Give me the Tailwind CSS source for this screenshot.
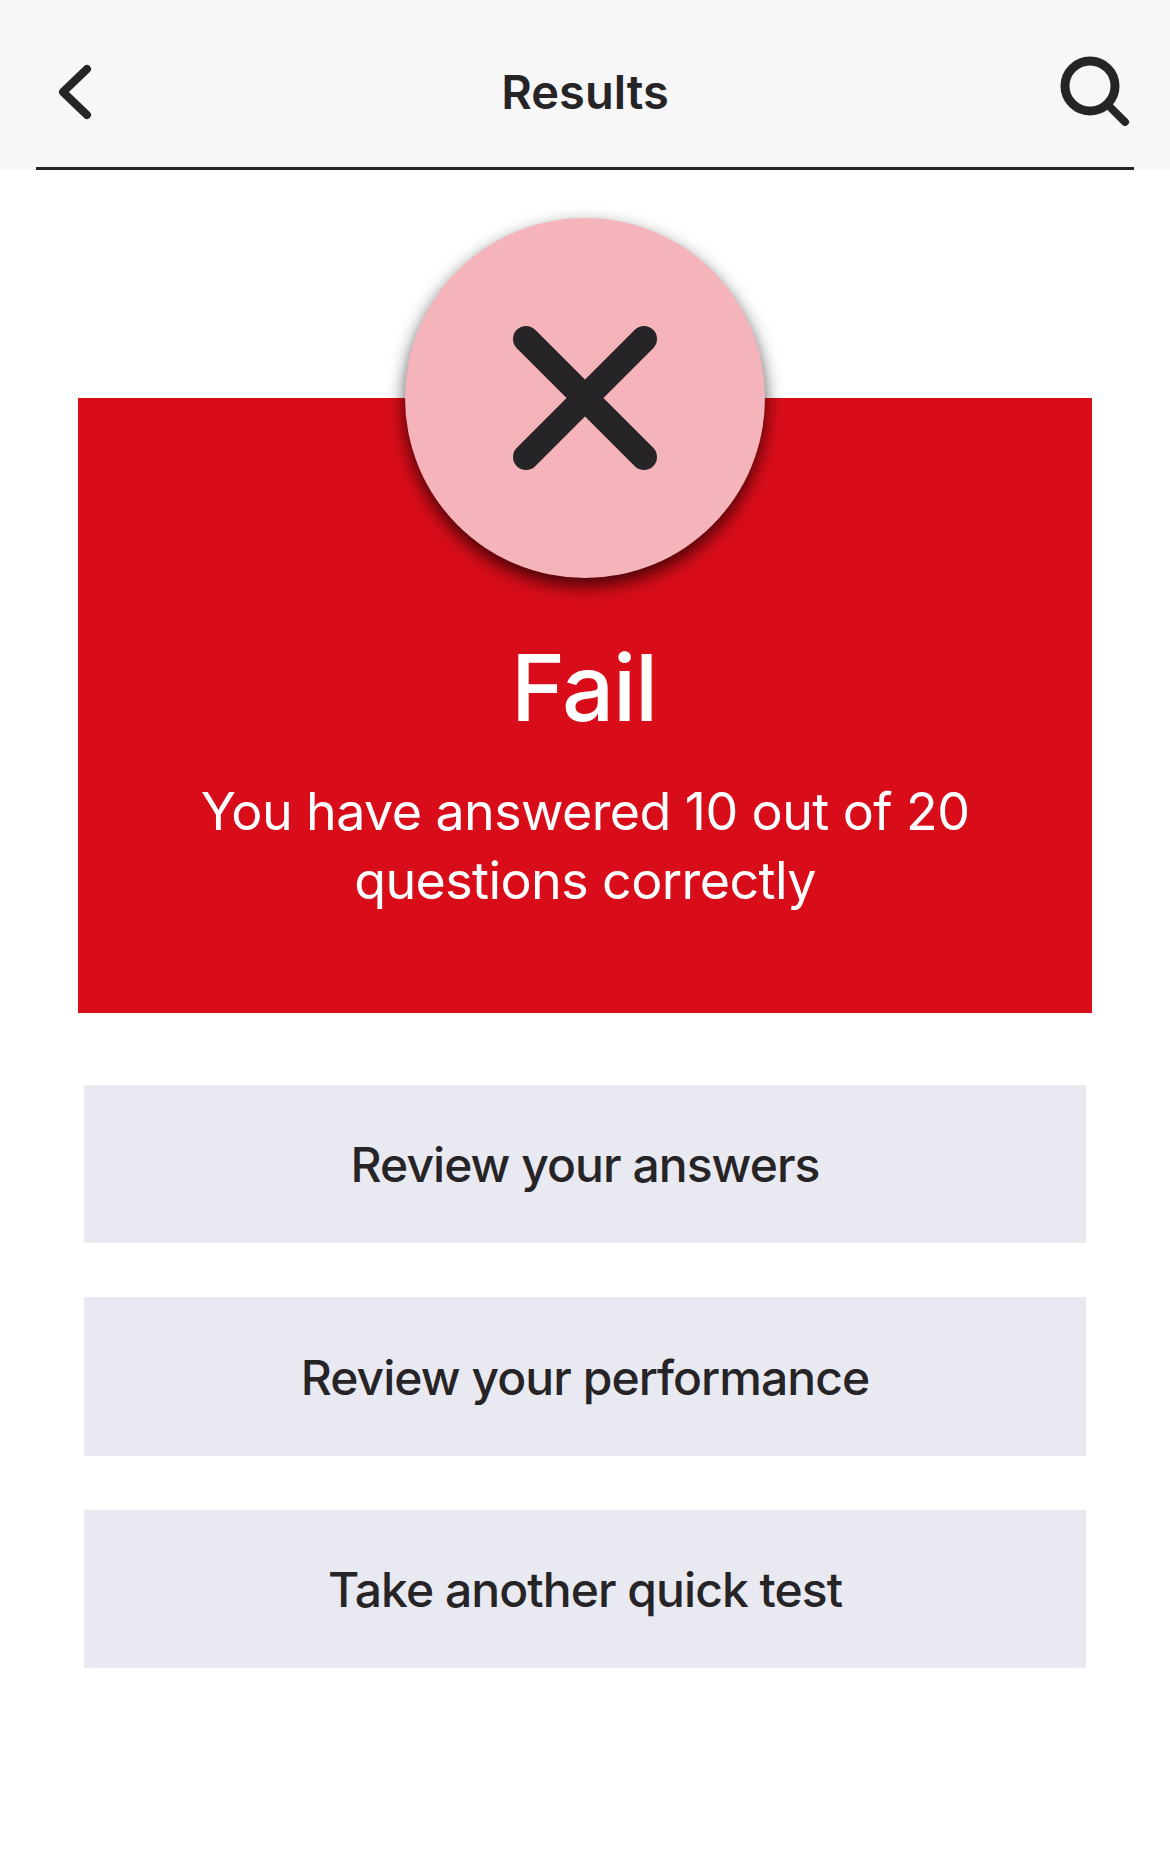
<!DOCTYPE html>
<html lang="en">

<head>
    <meta charset="UTF-8">
    <meta name="viewport" content="width=device-width, initial-scale=1.0">
    <title>Results</title>
    <script src="https://cdn.jsdelivr.net/npm/@tailwindcss/browser@4"></script>
</head>

<body class="bg-white h-screen overflow-hidden font-['Inter',sans-serif] text-[#262427]">

    <!-- Header -->
    <header class="bg-[#f7f7f7] h-[170px] px-[36px]">
        <div class="h-full flex items-center justify-between border-b-[3px] border-[#262427]">
            <div class="w-[100px]">
                <svg class="w-[60px] h-[80px] ml-[10px] mt-[10px]" viewBox="0 0 60 80" fill="none">
                    <path d="M41 20 L17 43 L41 66" stroke="#262427" stroke-width="8" stroke-linecap="round" stroke-linejoin="round" />
                </svg>
            </div>
            <h1 class="text-[47px] font-semibold leading-none mt-[16px]">Results</h1>
            <div class="w-[100px] flex justify-end">
                <svg class="w-[76px] h-[80px] mt-[20px]" viewBox="0 0 76 80" fill="none">
                    <circle cx="32" cy="32" r="25" stroke="#262427" stroke-width="9" />
                    <path d="M50 51 L67 68" stroke="#262427" stroke-width="8" stroke-linecap="round" />
                </svg>
            </div>
        </div>
    </header>

    <main class="px-[78px] pt-[228px]">
        <!-- Result card -->
        <section class="relative bg-[#d90d19] h-[615px] text-white text-center pt-[240px]">
            <div class="absolute left-1/2 top-[-180px] -ml-[180px] w-[360px] h-[360px] rounded-full bg-[#f5b3ba] shadow-[0_8px_18px_rgba(0,0,0,0.7)] flex items-center justify-center">
                <svg class="w-[144px] h-[144px]" viewBox="0 0 144 144" fill="none">
                    <path d="M13 13 L131 131 M131 13 L13 131" stroke="#262427" stroke-width="26" stroke-linecap="round" />
                </svg>
            </div>
            <h2 class="text-[92px] font-medium leading-[100px] tracking-[-1.2px] pr-[2px]">Fail</h2>
            <p class="text-[52px] leading-[69px] mt-[39px] tracking-[-0.6px]">You have answered 10 out of 20<br>questions correctly</p>
        </section>

        <!-- Actions -->
        <div class="flex flex-col gap-[54px] mt-[72px] px-[6px]">
            <button class="h-[158px] pt-[2px] bg-[#e9e9f1] text-[48px] font-[450] tracking-[-0.95px]">Review your answers</button>
            <button class="h-[159px] pt-[2px] bg-[#e9e9f1] text-[48px] font-[450] tracking-[-0.95px]">Review your performance</button>
            <button class="h-[158px] pt-[2px] bg-[#e9e9f1] text-[48px] font-[450] tracking-[-0.95px]">Take another quick test</button>
        </div>
    </main>

</body>

</html>
